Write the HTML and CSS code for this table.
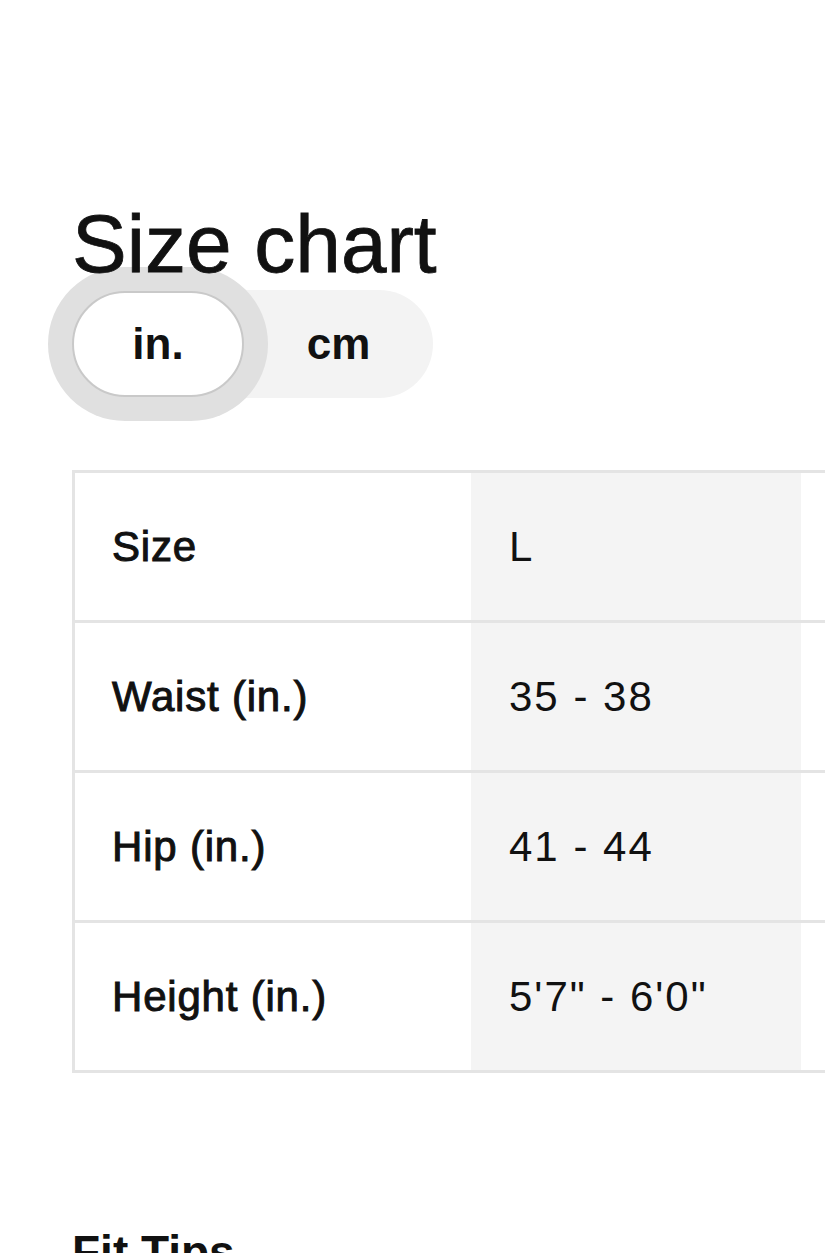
FILE: index.html
```html
<!DOCTYPE html>
<html lang="en">
<head>
  <meta charset="UTF-8" />
  <meta name="viewport" content="width=device-width, initial-scale=1.0" />
  <title>Size chart</title>
  <link rel="stylesheet" href="styles.css">
</head>
<body>
  <div class="sheet">
    <h1 class="title">Size chart</h1>

    <div class="unit-toggle">
      <button class="unit active">in.</button>
      <button class="unit">cm</button>
    </div>

    <table class="chart">
      <colgroup>
        <col class="col-label">
        <col class="col-size">
        <col class="col-size">
      </colgroup>
      <tr>
        <th>Size</th>
        <td class="shade">L</td>
        <td></td>
      </tr>
      <tr>
        <th>Waist (in.)</th>
        <td class="shade">35 - 38</td>
        <td></td>
      </tr>
      <tr>
        <th>Hip (in.)</th>
        <td class="shade">41 - 44</td>
        <td></td>
      </tr>
      <tr>
        <th>Height (in.)</th>
        <td class="shade">5'7" - 6'0"</td>
        <td></td>
      </tr>
    </table>

    <h2 class="tips">Fit Tips</h2>
  </div>
</body>
</html>
```

FILE: styles.css
```css
body {
  margin: 0;
  padding: 0;
  background: #ffffff;
  font-family: 'Liberation Sans', Arial, sans-serif;
  color: #111111;
  overflow: hidden;
}

.sheet {
  padding: 203px 0 0 72px;
}

/* Heading */
.title {
  position: relative;
  z-index: 1;
  margin: 0;
  font-size: 82px;
  line-height: 82px;
  font-weight: 400;
  -webkit-text-stroke: 0.8px #111111;
}

/* in. / cm switch */
.unit-toggle {
  display: inline-flex;
  margin-top: 5px;
  height: 108px;
  background: #f3f3f3;
  border-radius: 54px;
}

.unit {
  border: none;
  background: none;
  font-family: inherit;
  font-size: 44px;
  font-weight: 700;
  color: #111111;
  border-radius: 54px;
  padding: 0;
  cursor: pointer;
}

.unit:first-child {
  width: 172px;
}

.unit:last-child {
  width: 189px;
}

.unit.active {
  margin: 1px 0;
  background: #ffffff;
  border: 2px solid #c9c9c9;
  box-shadow: 0 0 0 24px #e0e0e0;
}

/* Table */
.chart {
  margin-top: 72px;
  table-layout: fixed;
  border-collapse: separate;
  border-spacing: 0;
  border: 3px solid #e4e4e4;
  border-right: none;
  width: 1059px;
  font-size: 42px;
}

.col-label {
  width: 396px;
}

.col-size {
  width: 330px;
}

.chart th,
.chart td {
  height: 147px;
  padding: 0 37px;
  text-align: left;
  vertical-align: middle;
  white-space: nowrap;
  border-bottom: 3px solid #e4e4e4;
}

.chart tr:last-child th,
.chart tr:last-child td {
  border-bottom: none;
}

.chart th {
  font-weight: 400;
  letter-spacing: 0.8px;
  -webkit-text-stroke: 1px #111111;
}

.chart td {
  font-weight: 400;
  letter-spacing: 2px;
}

.chart td.shade {
  padding-left: 38px;
  background: #f4f4f4;
}

.tips {
  margin: 156px 0 0;
  font-size: 46px;
  line-height: 46px;
  font-weight: 700;
}
```
